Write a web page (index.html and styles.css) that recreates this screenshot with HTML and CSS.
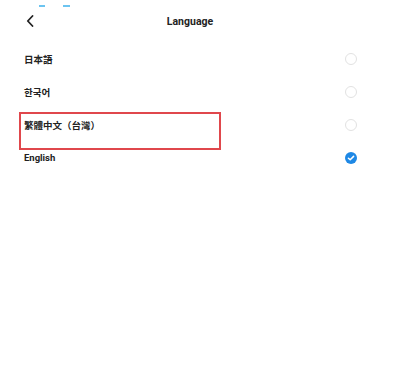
FILE: index.html
```html
<!DOCTYPE html>
<html>

<head>
    <title>Language</title>
    <meta name="viewport" content="width=device-width, initial-scale=1">
    <link rel="stylesheet" href="styles.css">
</head>

<body>
    <div class="page">
        <div class="status-marks">
            <span class="mark"></span>
            <span class="mark mark-wide"></span>
        </div>

        <header class="topbar">
            <span class="back">
                <svg width="8" height="12" viewBox="0 0 8 12">
                    <path d="M6.5 1 L1.8 6 L6.5 11" fill="none" stroke="#222" stroke-width="1.8" stroke-linecap="round" stroke-linejoin="round"/>
                </svg>
            </span>
            <h1 class="title">Language</h1>
        </header>

        <ul class="lang-list">
            <li class="lang-row">
                <span class="lang-name">日本語</span>
                <span class="radio"></span>
            </li>
            <li class="lang-row">
                <span class="lang-name">한국어</span>
                <span class="radio"></span>
            </li>
            <li class="lang-row highlighted">
                <span class="lang-name">繁體中文（台灣）</span>
                <span class="radio"></span>
            </li>
            <li class="lang-row">
                <span class="lang-name">English</span>
                <span class="radio checked">
                    <svg width="12" height="12" viewBox="0 0 12 12">
                        <circle cx="6" cy="6" r="6" fill="#1e88e5"/>
                        <path d="M3.4 6.2 L5.2 7.8 L8.6 4.4" fill="none" stroke="#fff" stroke-width="1.5" stroke-linecap="round" stroke-linejoin="round"/>
                    </svg>
                </span>
            </li>
        </ul>
    </div>
</body>

</html>
```

FILE: styles.css
```css
* {
    box-sizing: border-box;
    margin: 0;
    padding: 0;
}

body {
    font-family: Roboto, "Noto Sans CJK TC", "Noto Sans CJK JP", "Noto Sans CJK KR", sans-serif;
    background: #fff;
    color: #222;
}

.page {
    width: 380px;
    padding: 0 24px;
    position: relative;
}

.status-marks {
    position: absolute;
    top: 5px;
    left: 39px;
    display: flex;
    gap: 18px;
}

.mark {
    display: block;
    width: 6px;
    height: 1.5px;
    background: #6cc4f0;
}

.mark-wide {
    width: 7px;
}

.topbar {
    height: 42px;
    display: flex;
    align-items: center;
    justify-content: center;
    position: relative;
}

.back {
    position: absolute;
    left: 2px;
    top: 15px;
    display: flex;
}

.title {
    font-size: 10.5px;
    font-weight: 700;
    color: #222;
}

.lang-list {
    list-style: none;
}

.lang-row {
    height: 33px;
    display: flex;
    align-items: center;
    justify-content: space-between;
    position: relative;
}

.lang-name {
    font-size: 9.5px;
    font-weight: 700;
    color: #222;
}

.radio {
    width: 12px;
    height: 12px;
    border: 1px solid #e2e2e2;
    border-radius: 50%;
    margin-right: -1px;
    display: flex;
}

.radio.checked {
    border: none;
}

.highlighted::after {
    content: "";
    position: absolute;
    top: 4px;
    left: -5px;
    width: 198px;
    height: 34px;
    border: 2px solid #e0474c;
}
```
